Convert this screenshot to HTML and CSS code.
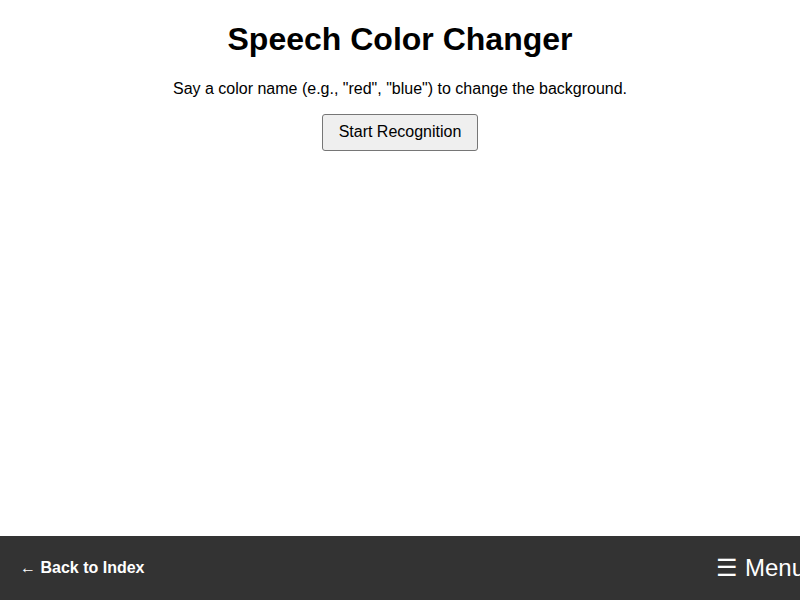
FILE: index.html
```html
<!DOCTYPE html>
<html lang="en">
<head>
<meta charset="utf-8">
<title>Speech Color Changer</title>
<link rel="stylesheet" href="styles.css">
</head>
<body>
<main class="content">
  <h1 class="title">Speech Color Changer</h1>
  <p class="hint">Say a color name (e.g., "red", "blue") to change the background.</p>
  <button class="start-btn" type="button">Start Recognition</button>
</main>
<footer class="footer">
  <a class="back-link" href="#">← Back to Index</a>
  <button class="menu-btn" type="button">☰ Menu</button>
</footer>
</body>
</html>
```

FILE: styles.css
```css
html, body {
  margin: 0;
  padding: 0;
  height: 100%;
}
body {
  font-family: "Liberation Sans", Arial, sans-serif;
  background: #ffffff;
  color: #000000;
}
.content {
  display: flex;
  flex-direction: column;
  align-items: center;
  text-align: center;
}
.title {
  font-size: 32px;
  font-weight: bold;
  margin: 21.44px 0;
}
.hint {
  font-size: 16px;
  margin: 0 0 16px 0;
}
.start-btn {
  font-family: "Liberation Sans", Arial, sans-serif;
  font-size: 16px;
  padding: 8.5px 16px;
  border: 1px solid #767676;
  border-radius: 3px;
  background: #efefef;
  color: #000;
}
.footer {
  position: fixed;
  left: 0;
  right: 0;
  bottom: 0;
  height: 64px;
  background: #333333;
  display: flex;
  align-items: center;
  justify-content: space-between;
  padding-left: 20px;
  overflow: hidden;
}
.back-link {
  color: #ffffff;
  font-weight: bold;
  font-size: 16px;
  text-decoration: none;
}
.menu-btn {
  font-family: "Liberation Sans", Arial, sans-serif;
  background: none;
  border: none;
  color: #ffffff;
  font-size: 24px;
  padding: 0;
  margin-right: -5px;
  white-space: nowrap;
}
```
